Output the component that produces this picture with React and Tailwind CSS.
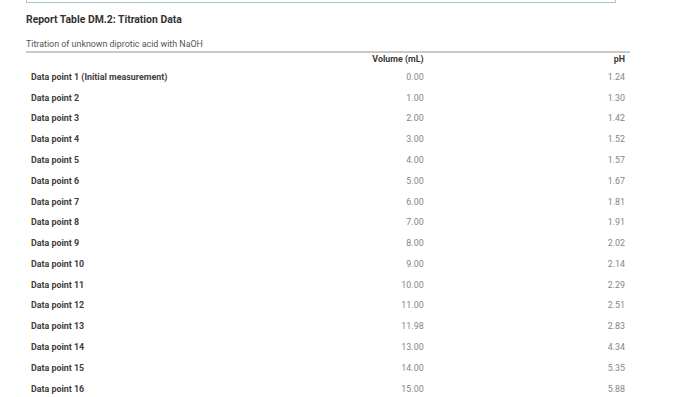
import React from "react";

const rows = [
  ["Data point 1 (Initial measurement)", "0.00", "1.24"],
  ["Data point 2", "1.00", "1.30"],
  ["Data point 3", "2.00", "1.42"],
  ["Data point 4", "3.00", "1.52"],
  ["Data point 5", "4.00", "1.57"],
  ["Data point 6", "5.00", "1.67"],
  ["Data point 7", "6.00", "1.81"],
  ["Data point 8", "7.00", "1.91"],
  ["Data point 9", "8.00", "2.02"],
  ["Data point 10", "9.00", "2.14"],
  ["Data point 11", "10.00", "2.29"],
  ["Data point 12", "11.00", "2.51"],
  ["Data point 13", "11.98", "2.83"],
  ["Data point 14", "13.00", "4.34"],
  ["Data point 15", "14.00", "5.35"],
  ["Data point 16", "15.00", "5.88"],
];

export default function App() {
  return (
    <div
      className="w-[700px] h-[397px] overflow-hidden bg-white pl-[26px]"
      style={{ fontFamily: "Roboto, 'Noto Sans', sans-serif" }}
    >
      <div className="w-[590px] h-[3px] border-x border-b border-[#a9c6d0]" />
      <div className="mt-[10px] text-[10.4px] leading-[14px] font-bold text-[#333]">
        Report Table DM.2: Titration Data
      </div>
      <div className="w-[604px]">
        <div className="mt-[11px] text-[8.9px] leading-[12px] text-[#555] pb-[1px] border-b-2 border-[#c9c9c9]">
          Titration of unknown diprotic acid with NaOH
        </div>
        <div className="grid grid-cols-3 h-[14px] items-center text-[8.9px] font-bold text-[#3a3a3a]">
          <div />
          <div className="text-right pr-[5px]">Volume (mL)</div>
          <div className="text-right pr-[5px]">pH</div>
        </div>
        {rows.map(([label, vol, ph]) => (
          <div
            key={label}
            className="grid grid-cols-3 h-[20.8px] items-center text-[8.9px]"
          >
            <div className="pl-[5px] font-bold text-[#404040] whitespace-nowrap">{label}</div>
            <div className="text-right pr-[5px] text-[#858585]">{vol}</div>
            <div className="text-right pr-[5px] text-[#858585]">{ph}</div>
          </div>
        ))}
      </div>
    </div>
  );
}
